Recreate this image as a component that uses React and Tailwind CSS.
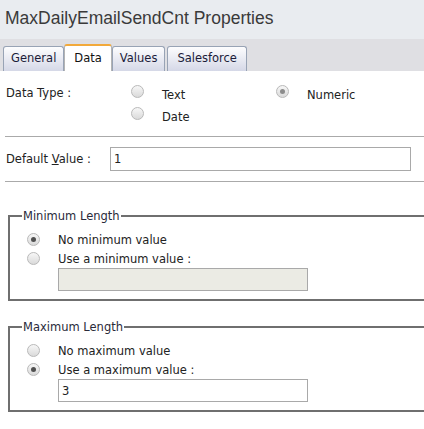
import React from 'react';

const TABS = [
  { label: 'General', pad: 'px-[7px]' },
  { label: 'Data', pad: 'px-[9px]' },
  { label: 'Values', pad: 'px-[7px]' },
  { label: 'Salesforce', pad: 'px-[9px]' },
];

/* Classic radio bullet */
function Radio({ checked = false, dim = false }) {
  return (
    <span className="flex h-[13px] w-[13px] shrink-0 items-center justify-center rounded-full border border-[#b9b9b9] bg-gradient-to-b from-[#f7f7f7] to-[#dadada]">
      {checked && (
        <span className={`h-[5px] w-[5px] rounded-full ${dim ? 'bg-[#8c8c8c]' : 'bg-[#505050]'}`} />
      )}
    </span>
  );
}

function Tab({ label, pad, active }) {
  if (active) {
    return (
      <div className={`-ml-[2px] flex h-[27px] items-center rounded-t-[3px] border-x border-t-2 border-x-[#b4b4b4] border-t-[#f2a93b] bg-white text-[#111] ${pad}`}>
        {label}
      </div>
    );
  }
  return (
    <div className={`mr-[2px] flex h-[25px] items-center rounded-t-[3px] border border-b-0 border-[#98a3b5] bg-gradient-to-b from-[#fdfdfe] to-[#d5d8e7] text-[#1c1c3a] ${pad}`}>
      {label}
    </div>
  );
}

function DataOption({ label, checked, dim }) {
  return (
    <div className="flex h-[22px] items-start">
      <Radio checked={checked} dim={dim} />
      <span className="ml-[18px] pt-[3px] leading-[14px]">{label}</span>
    </div>
  );
}

function LengthOption({ label, checked }) {
  return (
    <div className="flex h-[19px] items-center">
      <Radio checked={checked} />
      <span className="ml-[18px] leading-[14px]">{label}</span>
    </div>
  );
}

function LengthBox({ title, noLabel, useLabel, useMax, value, className }) {
  return (
    <fieldset className={`ml-[8px] w-[430px] border-2 border-[#6f6f6f] pb-[8px] ${className}`}>
      <legend className="ml-[12px] px-[1px] leading-[14px] text-[#2a2a3a]">{title}</legend>
      <div className="pl-[17px] pt-[7px]">
        <LengthOption label={noLabel} checked={!useMax} />
        <LengthOption label={useLabel} checked={useMax} />
        <div
          className={`ml-[31px] flex h-[23px] w-[250px] items-center border border-[#a9a9a9] px-[3px] leading-[14px] ${
            useMax ? 'bg-white' : 'bg-[#ebebe4]'
          }`}
        >
          {value}
        </div>
      </div>
    </fieldset>
  );
}

export default function App() {
  return (
    <div className="h-[429px] w-[424px] overflow-hidden bg-white font-['DejaVu_Sans',sans-serif] text-[11.5px] text-[#222]">
      {/* Title */}
      <div className="flex h-[39px] items-center bg-[#e9ecf0] pb-[10px] pl-[5px] pt-[8px] font-['Liberation_Sans',Arial,sans-serif] text-[17.5px] text-[#3a3a3a]">
        MaxDailyEmailSendCnt Properties
      </div>

      {/* Tab strip */}
      <div className="flex h-[32px] items-end bg-[#dfdfe3] pl-[3px]">
        {TABS.map(t => (
          <Tab key={t.label} label={t.label} pad={t.pad} active={t.label === 'Data'} />
        ))}
      </div>

      {/* Data type */}
      <div className="flex h-[65px] pl-[6px] pt-[14px]">
        <div className="w-[124px] pt-[1px] leading-[14px]">Data Type :</div>
        <div className="w-[146px] pl-[1px]">
          <DataOption label="Text" />
          <DataOption label="Date" />
        </div>
        <div>
          <DataOption label="Numeric" checked dim />
        </div>
      </div>
      <div className="ml-[5px] h-px bg-[#aaaaaa]" />

      {/* Default value */}
      <div className="flex items-center py-[10px] pl-[6px]">
        <div className="w-[104px] leading-[14px]">
          Default <span className="underline">V</span>alue :
        </div>
        <div className="flex h-[24px] w-[301px] items-center border border-[#a9a9a9] px-[3px] leading-[14px]">1</div>
      </div>
      <div className="mb-[27px] ml-[5px] h-px bg-[#aaaaaa]" />

      <LengthBox title="Minimum Length" noLabel="No minimum value" useLabel="Use a minimum value :" useMax={false} value="" />
      <LengthBox
        title="Maximum Length"
        noLabel="No maximum value"
        useLabel="Use a maximum value :"
        useMax
        value="3"
        className="mt-[19px]"
      />
    </div>
  );
}
